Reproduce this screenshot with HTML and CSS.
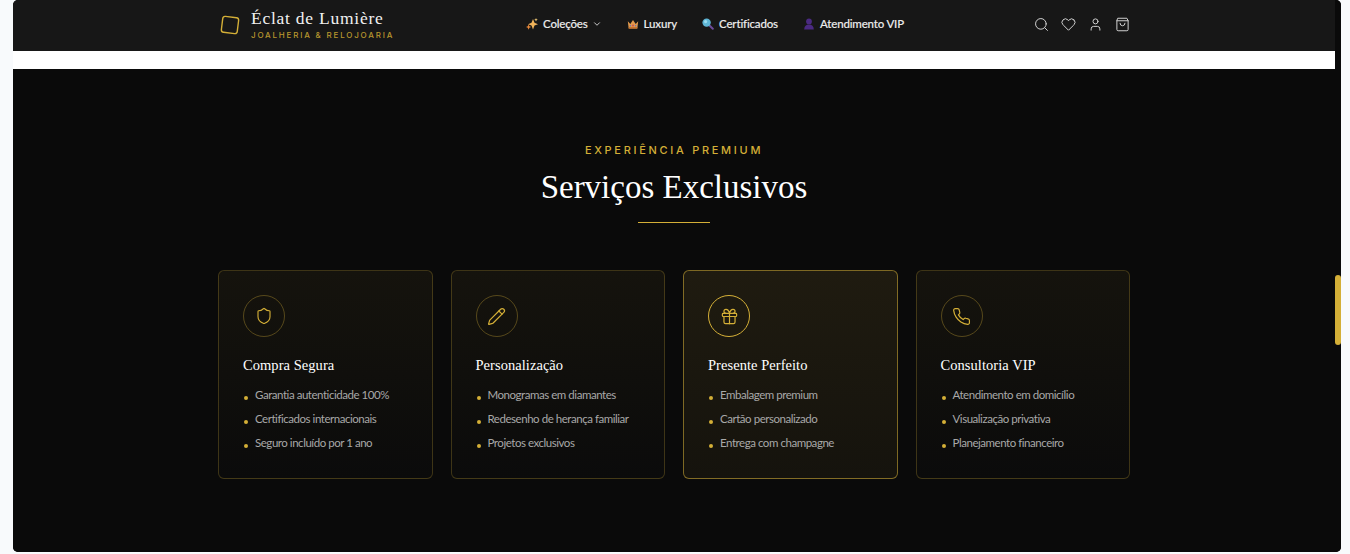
FILE: index.html
```html
<!DOCTYPE html>
<html lang="pt-BR">
<head>
<meta charset="utf-8">
<title>Éclat de Lumière</title>
<link rel="stylesheet" href="styles.css">
</head>
<body>
<div class="window">
  <div class="page">
    <header class="topbar">
      <div class="topbar-inner">
        <a class="brand">
          <svg class="brand-mark" width="20" height="20" viewBox="0 0 20 20" fill="none"><rect x="2" y="2" width="16" height="16" rx="2.5" transform="rotate(7 10 10)" stroke="#d4af37" stroke-width="1.4"/></svg>
          <span class="brand-text">
            <span class="brand-name">Éclat de Lumière</span>
            <span class="brand-sub">JOALHERIA &amp; RELOJOARIA</span>
          </span>
        </a>
        <nav class="nav">
          <a class="nav-link">
            <svg width="12" height="12" viewBox="0 0 12 12"><path d="M7 1 8.500 4.800 12 6.200 8.500 7.600 7 11.500 5.500 7.600 2 6.200 5.500 4.800Z" fill="#f0b35a"/><path d="M2.600 6.500 3.400 8.300 5.200 9 3.400 9.700 2.600 11.800 1.800 9.700 0 9 1.800 8.300Z" fill="#e8883a"/><path d="M10 0 10.500 1.300 11.800 1.800 10.500 2.300 10 3.600 9.500 2.300 8.200 1.800 9.500 1.300Z" fill="#f7cf7a"/></svg>
            <span>Coleções</span>
            <svg class="chev" width="10" height="10" viewBox="0 0 24 24" fill="none" stroke="#d8d8d8" stroke-width="2.200" stroke-linecap="round" stroke-linejoin="round"><path d="m6 9 6 6 6-6"/></svg>
          </a>
          <a class="nav-link">
            <svg width="12" height="12" viewBox="0 0 12 12"><path d="M.8 3.200 3.300 6 6 2 8.700 6 11.200 3.200 10.300 10.500H1.700Z" fill="#e29a4c"/><rect x="1.700" y="9" width="8.600" height="1.600" fill="#c9752f"/><circle cx="6" cy="7.400" r="1" fill="#d0524f"/><circle cx="3.400" cy="7.700" r=".7" fill="#5a78c8"/><circle cx="8.600" cy="7.700" r=".7" fill="#5a78c8"/></svg>
            <span>Luxury</span>
          </a>
          <a class="nav-link">
            <svg width="12" height="12" viewBox="0 0 12 12"><path d="m7 7 3.800 3.800" stroke="#6d4a9a" stroke-width="2" stroke-linecap="round"/><circle cx="4.600" cy="4.600" r="4.200" fill="#5fb6d6"/><circle cx="3.600" cy="3.600" r="1.600" fill="#9adcf0"/></svg>
            <span>Certificados</span>
          </a>
          <a class="nav-link">
            <svg width="12" height="12" viewBox="0 0 12 12" fill="#4b2a82"><circle cx="6" cy="3.400" r="2.900"/><path d="M1.200 11.600c0-3.400 2-5 4.800-5s4.800 1.600 4.800 5Z"/></svg>
            <span>Atendimento VIP</span>
          </a>
        </nav>
        <div class="actions">
          <svg width="15" height="15" viewBox="0 0 24 24" fill="none" stroke="#d0d0d0" stroke-width="1.600" stroke-linecap="round" stroke-linejoin="round"><circle cx="11" cy="11" r="8.500"/><path d="m21.500 21.500-4.300-4.300"/></svg>
          <svg width="15" height="15" viewBox="0 0 24 24" fill="none" stroke="#d0d0d0" stroke-width="1.600" stroke-linecap="round" stroke-linejoin="round"><path d="M20.800 4.600a5.500 5.500 0 0 0-7.800 0L12 5.700l-1-1.100a5.500 5.500 0 0 0-7.800 7.800l1 1L12 21.200l7.800-7.800 1-1a5.500 5.500 0 0 0 0-7.800z"/></svg>
          <svg width="15" height="15" viewBox="0 0 24 24" fill="none" stroke="#d0d0d0" stroke-width="1.600" stroke-linecap="round" stroke-linejoin="round"><path d="M19 21v-2a4 4 0 0 0-4-4H9a4 4 0 0 0-4 4v2"/><circle cx="12" cy="7" r="4"/></svg>
          <svg width="15" height="15" viewBox="0 0 24 24" fill="none" stroke="#d0d0d0" stroke-width="1.600" stroke-linecap="round" stroke-linejoin="round"><path d="M5 2h14l2 4v14a2 2 0 0 1-2 2H5a2 2 0 0 1-2-2V6z"/><path d="M3 6h18"/><path d="M16 10a4 4 0 0 1-8 0"/></svg>
        </div>
      </div>
    </header>
    <div class="strip"></div>
    <section class="services">
      <p class="eyebrow">EXPERIÊNCIA PREMIUM</p>
      <h2 class="title">Serviços Exclusivos</h2>
      <div class="rule"></div>
      <div class="grid">
        <article class="card">
          <div class="badge"><svg class="badge-icon-sm" viewBox="0 0 24 24" fill="none" stroke="#d4af37" stroke-width="1.500" stroke-linecap="round" stroke-linejoin="round"><path d="M20 13c0 5-3.500 7.500-7.700 9a1 1 0 0 1-.6 0C7.500 20.500 4 18 4 13V6a1 1 0 0 1 1-1c2 0 4.500-1.200 6.200-2.700a1.200 1.200 0 0 1 1.600 0C14.500 3.800 17 5 19 5a1 1 0 0 1 1 1z"/></svg></div>
          <h3 class="card-title">Compra Segura</h3>
          <ul class="features">
            <li>Garantia autenticidade 100%</li>
            <li>Certificados internacionais</li>
            <li>Seguro incluído por 1 ano</li>
          </ul>
        </article>
        <article class="card">
          <div class="badge"><svg class="badge-icon" viewBox="0 0 24 24" fill="none" stroke="#d4af37" stroke-width="1.500" stroke-linecap="round" stroke-linejoin="round"><path d="M21.200 6.800a2.800 2.800 0 0 0-4-4L3.800 16.200a2 2 0 0 0-.5.8l-1.300 4.400a.5.5 0 0 0 .6.6l4.400-1.300a2 2 0 0 0 .8-.5z"/><path d="m15 5 4 4"/></svg></div>
          <h3 class="card-title">Personalização</h3>
          <ul class="features">
            <li>Monogramas em diamantes</li>
            <li>Redesenho de herança familiar</li>
            <li>Projetos exclusivos</li>
          </ul>
        </article>
        <article class="card card-featured">
          <div class="badge"><svg class="badge-icon" viewBox="0 0 24 24" fill="none" stroke="#d4af37" stroke-width="1.500" stroke-linecap="round" stroke-linejoin="round"><rect x="3" y="8" width="18" height="4" rx="1"/><path d="M12 8v13"/><path d="M19 12v7a2 2 0 0 1-2 2H7a2 2 0 0 1-2-2v-7"/><path d="M7.500 8a2.500 2.500 0 0 1 0-5A4.800 8 0 0 1 12 8a4.800 8 0 0 1 4.500-5 2.500 2.500 0 0 1 0 5"/></svg></div>
          <h3 class="card-title">Presente Perfeito</h3>
          <ul class="features">
            <li>Embalagem premium</li>
            <li>Cartão personalizado</li>
            <li>Entrega com champagne</li>
          </ul>
        </article>
        <article class="card">
          <div class="badge"><svg class="badge-icon" viewBox="0 0 24 24" fill="none" stroke="#d4af37" stroke-width="1.500" stroke-linecap="round" stroke-linejoin="round"><path d="M22 16.900v3a2 2 0 0 1-2.200 2 19.800 19.800 0 0 1-8.600-3.100 19.500 19.500 0 0 1-6-6A19.800 19.800 0 0 1 2.100 4.200 2 2 0 0 1 4.100 2h3a2 2 0 0 1 2 1.700c.1 1 .4 1.900.7 2.800a2 2 0 0 1-.5 2.100L8.100 9.900a16 16 0 0 0 6 6l1.300-1.300a2 2 0 0 1 2.100-.4c.9.300 1.800.6 2.800.7a2 2 0 0 1 1.700 2z"/></svg></div>
          <h3 class="card-title">Consultoria VIP</h3>
          <ul class="features">
            <li>Atendimento em domicílio</li>
            <li>Visualização privativa</li>
            <li>Planejamento financeiro</li>
          </ul>
        </article>
      </div>
    </section>
  </div>
  <div class="scrolltrack"><div class="scrollthumb"></div></div>
</div>
</body>
</html>
```

FILE: styles.css
```css
* { box-sizing: border-box; }
html, body { margin: 0; height: 100%; overflow: hidden; }
body { background: #f8fafc; font-family: "Lato", sans-serif; }

.window {
  display: flex;
  width: 1328px;
  height: 552px;
  margin-left: 13px;
  overflow: hidden;
  border-radius: 5px;
  background: #0a0a0a;
}
.page { flex: 1; min-width: 0; display: flex; flex-direction: column; }

.topbar { height: 51px; flex: none; background: #171717; }
.topbar-inner {
  width: 912px;
  height: 100%;
  margin-left: 205px;
  padding-bottom: 2px;
  display: flex;
  align-items: center;
}
.brand { width: 306px; display: flex; align-items: center; gap: 11px; margin-left: 2px; }
.brand-mark { flex: none; }
.brand-text { display: flex; flex-direction: column; }
.brand-name {
  font-family: "Liberation Serif", serif;
  font-size: 17.5px;
  line-height: 20px;
  letter-spacing: .75px;
  color: #f1f1f1;
}
.brand-sub {
  margin-top: 1px;
  font-family: "Inter", sans-serif;
  font-size: 8px;
  font-weight: 500;
  line-height: 12px;
  letter-spacing: 1.8px;
  color: #b8962e;
}
.nav {
  display: flex;
  align-items: center;
  gap: 25px;
  margin-bottom: 2px;
  font-size: 11.5px;
  font-weight: 500;
  color: #ececec;
}
.nav-link {
  display: flex;
  align-items: center;
  gap: 5px;
  letter-spacing: -.17px;
  -webkit-text-stroke: .12px #ececec;
  white-space: nowrap;
}
.chev { margin-left: -1px; }
.actions { margin-left: auto; display: flex; align-items: center; gap: 12px; }

.strip { height: 18px; flex: none; background: #fff; }

.services { flex: 1; display: flex; flex-direction: column; align-items: center; background: #0a0a0a; }
.eyebrow {
  margin: 75px 0 0;
  font-family: "Inter", sans-serif;
  font-size: 11px;
  font-weight: 500;
  line-height: 13px;
  letter-spacing: 2.7px;
  color: #d4af37;
}
.title {
  margin: 8px 0 0;
  font-family: "Liberation Serif", serif;
  font-size: 33px;
  line-height: 44px;
  font-weight: 400;
  color: #fff;
}
.rule { width: 72px; height: 1px; margin-top: 13px; background: #d4af37; }

.grid {
  width: 912px;
  margin-top: 47px;
  display: grid;
  grid-template-columns: repeat(4, 1fr);
  gap: 18px;
}
.card {
  height: 209px;
  padding: 24px;
  border: 1px solid rgba(212, 175, 55, .25);
  border-radius: 6px;
  background: linear-gradient(180deg, #15130d 0%, #0b0b0b 100%);
}
.card-featured {
  border-color: rgba(212, 175, 55, .55);
  background: linear-gradient(180deg, #1f1b10 0%, #15130d 100%);
}
.badge {
  width: 42px;
  height: 42px;
  display: flex;
  align-items: center;
  justify-content: center;
  border: 1px solid rgba(212, 175, 55, .35);
  border-radius: 50%;
}
.badge-icon { width: 19px; height: 19px; }
.badge-icon-sm { width: 18px; height: 18px; }
.card-featured .badge { border-color: #d4af37; }
.card-title {
  margin: 18px 0 0;
  font-family: "Liberation Serif", serif;
  font-size: 14.5px;
  line-height: 20px;
  font-weight: 400;
  letter-spacing: .05px;
  color: #fff;
}
.features { list-style: none; margin: 8px 0 0; padding: 0; }
.features li {
  position: relative;
  height: 24px;
  padding-left: 12px;
  font-size: 11.5px;
  line-height: 24px;
  letter-spacing: -.46px;
  white-space: nowrap;
  color: #a8a8a8;
}
.features li::before {
  content: "";
  position: absolute;
  left: 1px;
  top: 13px;
  width: 4px;
  height: 4px;
  border-radius: 50%;
  background: #d4af37;
}

.scrolltrack { position: relative; width: 6px; flex: none; background: #0a0a0a; }
.scrollthumb {
  position: absolute;
  top: 275px;
  left: 0;
  width: 6px;
  height: 70px;
  border-radius: 3px;
  background: #d4af37;
}
```
